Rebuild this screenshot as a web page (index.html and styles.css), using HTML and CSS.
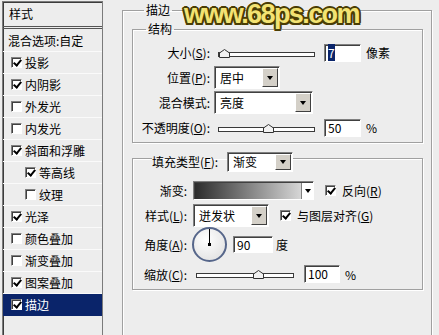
FILE: index.html
```html
<!DOCTYPE html>
<html lang="zh-CN">
<head>
  <meta charset="UTF-8">
  <title>图层样式 - 描边</title>
  <link rel="stylesheet" href="styles.css">
</head>
<body>
  <div class="sidebar">
    <div class="side-head">样式</div>
    <div class="side-item plain">混合选项:自定</div>
    <div class="side-item"><span class="cb on"></span>投影</div>
    <div class="side-item"><span class="cb on"></span>内阴影</div>
    <div class="side-item"><span class="cb"></span>外发光</div>
    <div class="side-item"><span class="cb"></span>内发光</div>
    <div class="side-item"><span class="cb on"></span>斜面和浮雕</div>
    <div class="side-item sub"><span class="cb on"></span>等高线</div>
    <div class="side-item sub"><span class="cb"></span>纹理</div>
    <div class="side-item"><span class="cb on"></span>光泽</div>
    <div class="side-item"><span class="cb"></span>颜色叠加</div>
    <div class="side-item"><span class="cb"></span>渐变叠加</div>
    <div class="side-item"><span class="cb on"></span>图案叠加</div>
    <div class="side-item active"><span class="cb on"></span>描边</div>
  </div>

  <div class="main">
    <div class="watermark">www.68ps.com</div>

    <fieldset class="group outer">
      <legend>描边</legend>

      <!-- 结构 -->
      <fieldset class="group inner struct">
        <legend>结构</legend>
        <div class="form form-struct">
          <label>大小(<u>S</u>):</label>
          <div class="ctrl">
            <div class="slider"><span class="thumb" style="left: 0px"><svg width="11" height="9" viewBox="0 0 11 9"><path d="M0.5 8.5 V4 L5.5 0.5 L10.5 4 V8.5 Z" fill="#f2f2f2" stroke="#333"/></svg></span></div>
            <span class="field"><span class="sel">7</span></span>
            <span class="unit">像素</span>
          </div>

          <label>位置(<u>P</u>):</label>
          <div class="ctrl">
            <div class="select pos"><span class="value">居中</span><span class="btn"></span></div>
          </div>

          <label>混合模式:</label>
          <div class="ctrl">
            <div class="select mode"><span class="value">亮度</span><span class="btn"></span></div>
          </div>

          <label>不透明度(<u>O</u>):</label>
          <div class="ctrl">
            <div class="slider"><span class="thumb" style="left: 44px"><svg width="11" height="9" viewBox="0 0 11 9"><path d="M0.5 8.5 V4 L5.5 0.5 L10.5 4 V8.5 Z" fill="#f2f2f2" stroke="#333"/></svg></span></div>
            <span class="field">50</span>
            <span class="unit">%</span>
          </div>
        </div>
      </fieldset>

      <!-- 填充类型 -->
      <fieldset class="group inner fill">
        <legend>
          <span>填充类型(<u>F</u>):</span>
          <span class="select type"><span class="value">渐变</span><span class="btn"></span></span>
        </legend>
        <div class="form form-fill">
          <label>渐变:</label>
          <div class="ctrl">
            <div class="gradient"><span class="ramp"></span><span class="btn-flat"></span></div>
            <span class="check"><span class="cb on"></span><span>反向(<u>R</u>)</span></span>
          </div>

          <label>样式(<u>L</u>):</label>
          <div class="ctrl">
            <div class="select style"><span class="value">迸发状</span><span class="btn"></span></div>
            <span class="check"><span class="cb on"></span><span>与图层对齐(<u>G</u>)</span></span>
          </div>

          <label>角度(<u>A</u>):</label>
          <div class="ctrl">
            <div class="dial"></div>
            <span class="field angle">90</span>
            <span class="unit tight">度</span>
          </div>

          <label>缩放(<u>C</u>):</label>
          <div class="ctrl">
            <div class="slider scale"><span class="thumb" style="left: 56px"><svg width="11" height="9" viewBox="0 0 11 9"><path d="M0.5 8.5 V4 L5.5 0.5 L10.5 4 V8.5 Z" fill="#f2f2f2" stroke="#333"/></svg></span></div>
            <span class="field pct">100</span>
            <span class="unit">%</span>
          </div>
        </div>
      </fieldset>
    </fieldset>
  </div>
</body>
</html>
```

FILE: styles.css
```css
/* Reset */
* {
  box-sizing: border-box;
  margin: 0;
  padding: 0;
}

body {
  font-family: "Noto Sans CJK SC", "Liberation Sans", sans-serif;
  font-size: 12px;
  color: #000;
  background: #ededed;
  width: 439px;
  height: 335px;
  overflow: hidden;
  display: flex;
  align-items: flex-start;
}

/* Style list on the left */
.sidebar {
  width: 101px;
  height: 345px;
  margin: 1px 0 0 2px;
  border: 1px solid #7b7b7b;
  box-shadow: inset 1px 1px 0 #3c3c3c;
  flex-shrink: 0;
}

.side-head {
  height: 27px;
  padding-left: 6px;
  line-height: 24px;
  border-bottom: 3px double #555;
}

.side-item {
  display: flex;
  align-items: center;
  gap: 3px;
  height: 22px;
  padding-left: 8px;
  border-bottom: 1px solid #fafafa;
  white-space: nowrap;
}

.side-item.plain {
  height: 23px;
  padding-left: 5px;
}

.side-item.sub {
  padding-left: 22px;
}

.side-item.active {
  background: #0a246a;
  color: #fff;
  border-bottom-color: #0a246a;
}

/* Classic sunken checkbox */
.cb {
  position: relative;
  width: 11px;
  height: 11px;
  flex-shrink: 0;
  background: #fff;
  border: 1px solid;
  border-color: #808080 #fff #fff #808080;
  box-shadow: inset 1px 1px 0 #404040;
}

.cb.on::after {
  content: "";
  position: absolute;
  left: 3px;
  top: 0px;
  width: 3px;
  height: 6px;
  border: solid #000;
  border-width: 0 2px 2px 0;
  transform: rotate(40deg);
}

/* Right side */
.main {
  flex: 1;
  position: relative;
}

.watermark {
  position: absolute;
  left: 81px;
  top: -1px;
  font-family: "Liberation Sans", sans-serif;
  font-weight: bold;
  font-size: 27px;
  letter-spacing: -1.6px;
  white-space: nowrap;
  color: #f3e373;
  text-shadow:
    2px 0 0 #4a3d05, -2px 0 0 #4a3d05, 0 2px 0 #4a3d05, 0 -2px 0 #4a3d05,
    1.5px 1.5px 0 #4a3d05, -1.5px 1.5px 0 #4a3d05, 1.5px -1.5px 0 #4a3d05, -1.5px -1.5px 0 #4a3d05;
  z-index: 2;
}

.group {
  border: 1px solid #a0a0a0;
  box-shadow: 1px 1px 0 #fff, inset 1px 1px 0 #fff;
  min-width: 0;
}

.group > legend {
  padding: 0 2px;
  line-height: 16px;
}

.outer {
  width: 310px;
  height: 345px;
  margin: 2px 0 0 19px;
  padding: 0 8px 0 9px;
}

.outer > legend {
  margin-left: 12px;
}

.inner {
  width: 291px;
  padding: 0;
}

.struct {
  margin-top: 3px;
}

.struct > legend {
  margin-left: 13px;
}

.fill {
  margin-top: 1px;
}

.fill > legend {
  display: flex;
  align-items: center;
  gap: 9px;
  margin-left: 19px;
  padding: 8px 0 0;
  line-height: 20px;
}

/* Form rows */
.form {
  display: grid;
  column-gap: 4px;
  align-items: center;
}

.form-struct {
  grid-template-columns: 77px auto;
  grid-auto-rows: 25px;
  padding: 3px 0 2px;
}

.form-fill {
  grid-template-columns: 54px auto;
  grid-template-rows: 25px 25px 33px 26px;
  column-gap: 6px;
  padding: 6px 0 2px;
}

.form label {
  text-align: right;
  white-space: nowrap;
}

.ctrl {
  display: flex;
  align-items: center;
}

/* Slider */
.slider {
  position: relative;
  width: 97px;
  height: 5px;
  margin: 3px 0 0 4px;
  background: #fff;
  border: 1px solid #3a3a3a;
}

.slider.scale {
  width: 98px;
  margin-left: 3px;
}

.thumb {
  position: absolute;
  bottom: -2px;
  width: 11px;
  height: 9px;
  line-height: 0;
}

/* Text field */
.field {
  width: 37px;
  height: 18px;
  margin-left: 9px;
  padding-left: 3px;
  line-height: 16px;
  background: #fff;
  border: 1px solid;
  border-color: #808080 #fff #fff #808080;
  box-shadow: inset 1px 1px 0 #404040;
}

.field .sel {
  background: #0a246a;
  color: #fff;
}

.field.angle {
  width: 40px;
  height: 17px;
  margin-left: 6px;
}

.field.pct {
  width: 36px;
  margin-left: 10px;
}

.unit {
  margin-left: 5px;
}

.unit.tight {
  margin-left: 3px;
}

/* Drop-down */
.select {
  display: flex;
  height: 23px;
  background: #fff;
  border: 1px solid;
  border-color: #808080 #fff #fff #808080;
  box-shadow: inset 1px 1px 0 #404040;
  padding: 1px;
}

.select .value {
  flex: 1;
  padding-left: 4px;
  line-height: 19px;
}

.select .btn {
  width: 16px;
  display: flex;
  align-items: center;
  justify-content: center;
  background: #d4d0c8;
  border: 1px solid;
  border-color: #fff #404040 #404040 #fff;
}

.select .btn::after,
.gradient .btn-flat::after {
  content: "";
  border-top: 4px solid #000;
  border-left: 3.5px solid transparent;
  border-right: 3.5px solid transparent;
}

.select.pos {
  width: 66px;
}

.select.mode {
  width: 99px;
}

.select.type {
  width: 66px;
  height: 20px;
}

.select.type .value {
  line-height: 16px;
}

.select.style {
  width: 76px;
}

/* Gradient preview */
.gradient {
  display: flex;
  width: 121px;
  height: 19px;
  border: 1px solid;
  border-color: #808080 #fff #fff #808080;
  box-shadow: inset 1px 1px 0 #404040;
  padding: 1px 0 0 1px;
  background: #fff;
}

.gradient .ramp {
  flex: 1;
  background: linear-gradient(to right, #2c2c2c, #d6d6d6);
}

.gradient .btn-flat {
  width: 12px;
  display: flex;
  align-items: center;
  justify-content: center;
  border-left: 1px solid #808080;
}

.check {
  display: flex;
  align-items: center;
  gap: 6px;
  margin-left: 11px;
  white-space: nowrap;
}

/* Angle dial */
.dial {
  position: relative;
  width: 35px;
  height: 35px;
  margin-left: -1px;
  border-radius: 50%;
  border: 2px solid #56668a;
  background: radial-gradient(circle at 40% 35%, #ffffff, #dcdcdc);
}

.dial::before {
  content: "";
  position: absolute;
  left: 15px;
  top: 0;
  width: 1px;
  height: 16px;
  background: #000;
}

.dial::after {
  content: "";
  position: absolute;
  left: 14px;
  top: 14px;
  width: 3px;
  height: 3px;
  background: #000;
}
```
